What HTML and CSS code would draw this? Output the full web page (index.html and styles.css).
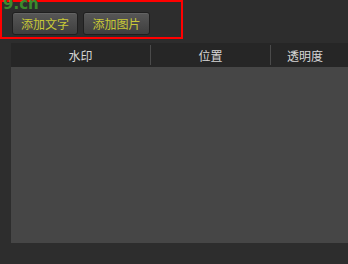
FILE: index.html
```html
<!DOCTYPE html>
<html>
<head>
<meta charset="utf-8">
<link rel="stylesheet" href="styles.css">
</head>
<body>
<div class="page">
  <div class="toolbar">
    <button class="btn">添加文字</button>
    <button class="btn wide">添加图片</button>
  </div>
  <div class="table">
    <div class="thead">
      <div class="th c1"><span>水印</span></div>
      <div class="th c2"><span>位置</span></div>
      <div class="th c3"><span>透明度</span></div>
    </div>
    <div class="tbody"></div>
  </div>
  <div class="mark">9.cn</div>
</div>
</body>
</html>
```

FILE: styles.css
```css
* { box-sizing: border-box; }
html, body { margin: 0; padding: 0; }
body {
  width: 348px;
  height: 264px;
  background: #2d2d2d;
  font-family: "Noto Sans CJK SC", "Noto Sans", sans-serif;
  overflow: hidden;
}
.page { position: relative; width: 348px; height: 264px; display: flex; flex-direction: column; }
.toolbar {
  width: 183px;
  height: 39px;
  border: 2px solid #ff0000;
  display: flex;
  gap: 5px;
  padding: 10px 0 0 10px;
}
.btn {
  width: 66px;
  height: 23px;
  margin: 0;
  padding: 0;
  border: 1px solid #1f1f1f;
  border-radius: 3px;
  background: linear-gradient(#575757, #3f3f3f);
  box-shadow: inset 0 1px 0 #636363;
  color: #c9c936;
  font-family: "Noto Sans CJK SC", sans-serif;
  font-size: 12px;
  line-height: 21px;
}
.wide { width: 67px; }
.table { margin: 4px 0 0 11px; display: flex; flex-direction: column; }
.thead {
  height: 24px;
  background: #262626;
  display: flex;
  align-items: center;
  color: #d6d6d6;
  font-size: 12px;
}
.th { height: 20px; display: flex; align-items: center; justify-content: center; }
.c1 { width: 140px; border-right: 1px solid #4a4a4a; }
.c2 { width: 120px; border-right: 1px solid #4a4a4a; }
.c3 { width: 68px; }
.tbody { height: 176px; background: #464646; }
.mark {
  position: absolute;
  left: 3px;
  top: -5px;
  color: #3c8a2c;
  font-family: "DejaVu Sans", sans-serif;
  font-weight: bold;
  font-size: 15px;
}
```
